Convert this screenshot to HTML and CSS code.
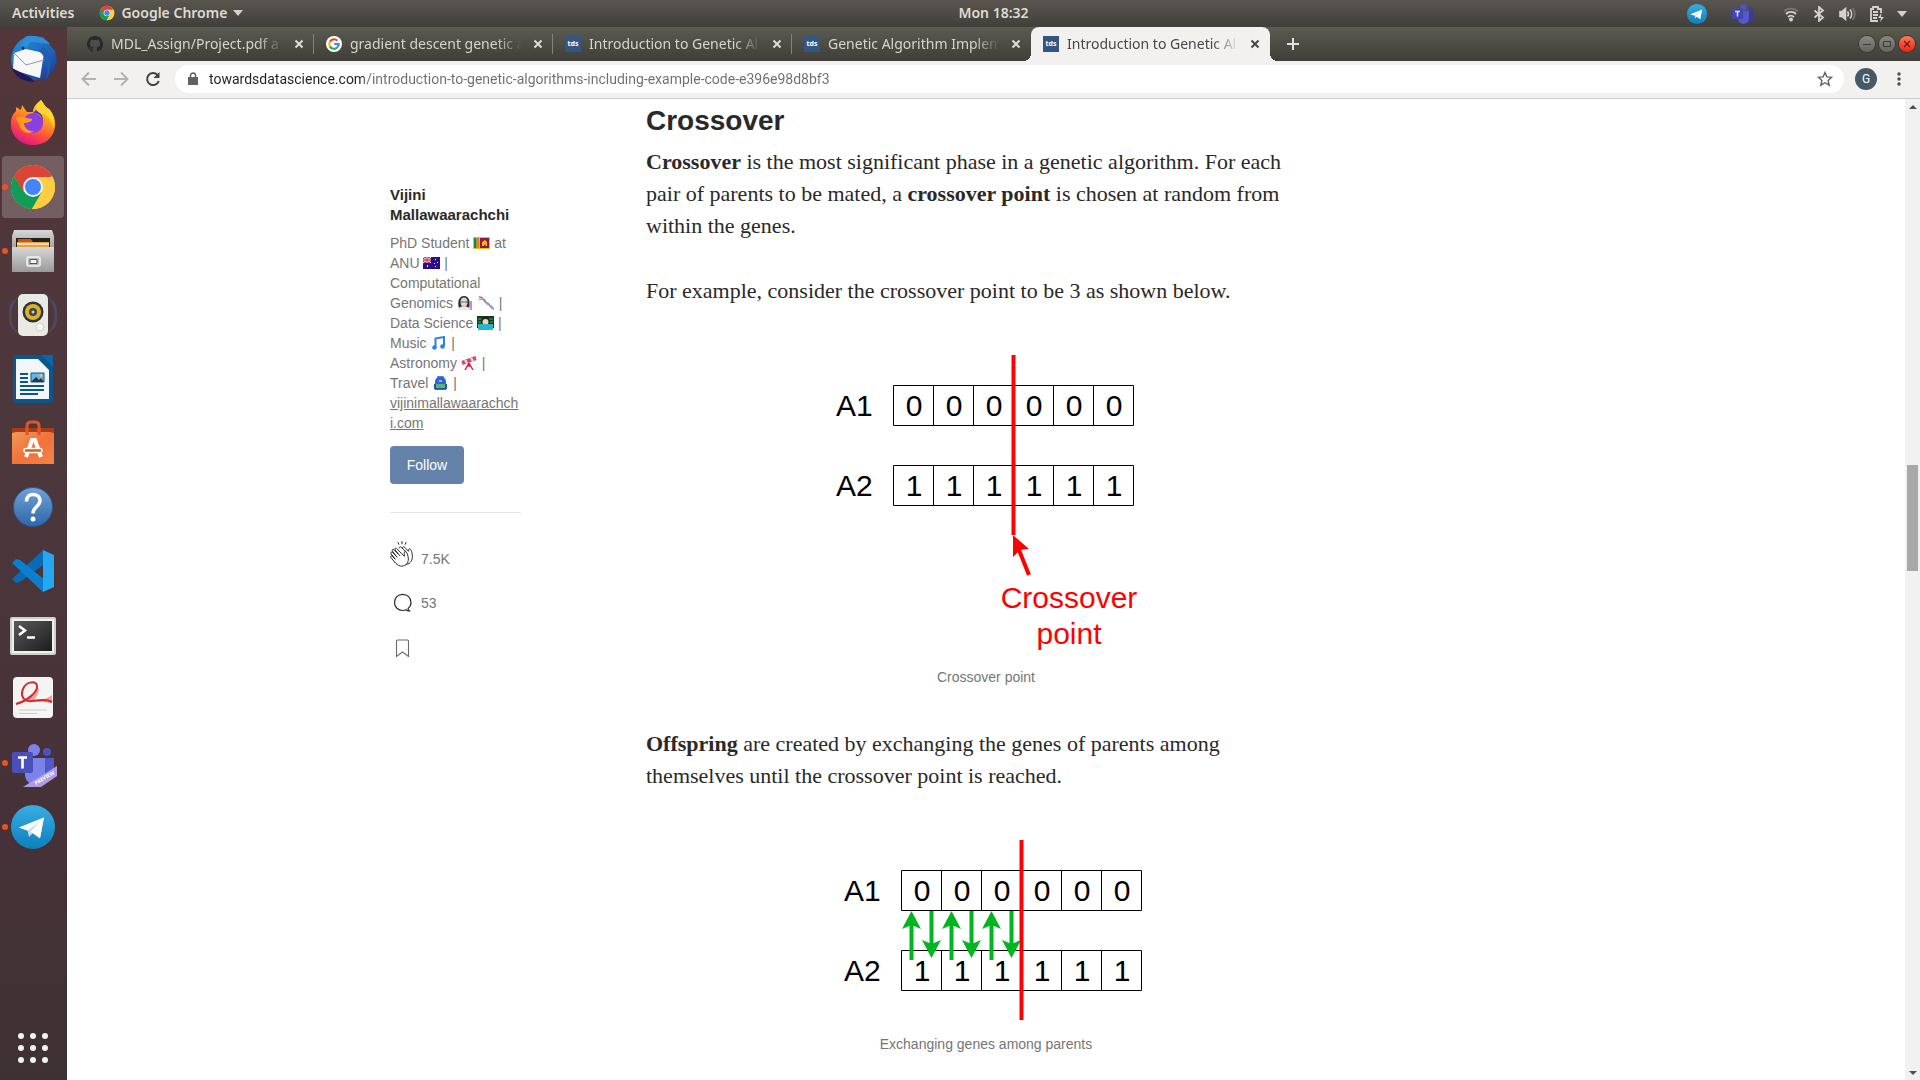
FILE: index.html
```html
<!DOCTYPE html>
<html lang="en">
<head>
<meta charset="utf-8">
<meta name="viewport" content="width=device-width, initial-scale=1">
<title>Introduction to Genetic Algorithms</title>
<link rel="stylesheet" href="styles.css">
</head>
<body>
<svg class="defs" width="0" height="0" aria-hidden="true">
  <defs>
    <linearGradient id="tg" x1="0" y1="0" x2="0" y2="1"><stop offset="0" stop-color="#37aee2"/><stop offset="1" stop-color="#0d7fbd"/></linearGradient>
    <linearGradient id="ffx" x1=".8" y1="0" x2=".3" y2="1"><stop offset="0" stop-color="#fff44f"/><stop offset=".35" stop-color="#ffa31a"/><stop offset=".7" stop-color="#ff4a3f"/><stop offset="1" stop-color="#e0128c"/></linearGradient>
    <linearGradient id="bird" x1="0" y1="0" x2="1" y2="1"><stop offset="0" stop-color="#2a8fe0"/><stop offset=".6" stop-color="#1c63b8"/><stop offset="1" stop-color="#1c2f8c"/></linearGradient>
    <linearGradient id="steel" x1="0" y1="0" x2="0" y2="1"><stop offset="0" stop-color="#d6d6d6"/><stop offset="1" stop-color="#9a9a9a"/></linearGradient>
    <linearGradient id="bag" x1="0" y1="0" x2="1" y2="1"><stop offset="0" stop-color="#f09a5a"/><stop offset=".5" stop-color="#f0733a"/><stop offset="1" stop-color="#f4824a"/></linearGradient>
    <linearGradient id="helpg" x1="0" y1="0" x2="0" y2="1"><stop offset="0" stop-color="#6fa3d8"/><stop offset="1" stop-color="#2f66a8"/></linearGradient>
    <linearGradient id="term" x1="0" y1="0" x2="1" y2="1"><stop offset="0" stop-color="#5a5a5a"/><stop offset="1" stop-color="#1c1c1c"/></linearGradient>
    <symbol id="chrome" viewBox="0 0 48 48">
      <circle cx="24" cy="24" r="22" fill="#ffcd40"/>
      <path d="M24 24 43 13A22 22 0 0 0 4.900 13L14 29z" fill="#db4437"/>
      <path d="M4.900 13A22 22 0 0 0 23 46L33 29 24 24 14.500 29z" fill="#0f9d58"/>
      <path d="M24 14H43.600A22 22 0 0 1 23 46L33 29z" fill="#ffcd40"/>
      <circle cx="24" cy="24" r="10" fill="#f1f1f1"/><circle cx="24" cy="24" r="8" fill="#4285f4"/>
    </symbol>
    <symbol id="telegram" viewBox="0 0 48 48">
      <circle cx="24" cy="24" r="22" fill="url(#tg)"/>
      <path d="M10 24.500 35 14.500 31 35 24 30 20 34 18.500 27.500z" fill="#c8daea"/>
      <path d="M10 24.500 35 14.500 31 35.500 21.500 28.500 31 18.500 18.500 27.500z" fill="#fff"/>
    </symbol>
    <symbol id="tds" viewBox="0 0 16 16"><path d="M0 0h16v16H0z" fill="#355680"/><text x="8" y="10" text-anchor="middle" font-family="Noto Sans, sans-serif" font-weight="700" font-size="7" fill="#fff">tds</text></symbol>
    <symbol id="cross" viewBox="0 0 16 16"><path d="M4.500 4.500l7 7M11.500 4.500l-7 7" stroke="currentColor" stroke-width="2" fill="none"/></symbol>
  </defs>
</svg>

<header class="topbar">
  <div class="top-left">
    <button class="top-btn">Activities</button>
    <button class="top-btn app-menu"><svg width="16" height="16"><use href="#chrome"/></svg>Google Chrome<span class="caret"></span></button>
  </div>
  <button class="top-btn clock">Mon 18:32</button>
  <div class="tray">
    <svg class="tray-app" width="22" height="22"><use href="#telegram"/></svg>
    <svg class="tray-teams" width="22" height="20" viewBox="0 0 22 20"><circle cx="18.500" cy="4.500" r="2.300" fill="#3a3f9f"/><path d="M15 7h7v6a4 4 0 0 1-7 3z" fill="#383d9c"/><circle cx="11.500" cy="3.300" r="3.200" fill="#4f54c0"/><path d="M6 7h11v7a5.500 5.500 0 0 1-11 1z" fill="#5458cc"/><path d="M0 4.500h11v10.500H0z" fill="#4146b4"/><path d="M3 7.500h5M5.500 7.500v5" stroke="#ddd" stroke-width="1.500"/></svg>
    <svg width="16" height="16" viewBox="0 0 16 16" fill="none" stroke-width="1.800"><path d="M1 5.500a10 10 0 0 1 14 0" stroke="#77756f"/><path d="M3 8a7 7 0 0 1 10 0M5 11a4.500 4.500 0 0 1 6 0" stroke="#d4d2cc"/><circle cx="8" cy="13.500" r="2" fill="#d4d2cc"/></svg>
    <svg width="16" height="16" viewBox="0 0 16 16" fill="none" stroke="#d4d2cc" stroke-width="1.800"><path d="M3.500 4.500l8.500 7-4 3.500V1l4 3.500-8.500 7"/></svg>
    <svg width="18" height="16" viewBox="0 0 18 16" fill="none" stroke="#d4d2cc" stroke-width="1.600"><path d="M1 5.500h2L6.500 2.500v11L3 10.500H1z" fill="#d4d2cc"/><path d="M8.500 5.500a4 4 0 0 1 0 5M11 3.500a7 7 0 0 1 0 9"/><path d="M13.500 2a9 9 0 0 1 0 12" stroke="#77756f"/></svg>
    <svg width="16" height="18" viewBox="0 0 16 18" fill="none" stroke="#d4d2cc" stroke-width="1.800"><path d="M9 16H2V4h2V2h5v2h3v4M4 7h5M4 10h5M4 13h4"/><path d="M12.500 8 9 13h3l-1 4 4-5h-3z" fill="#d4d2cc" stroke="none"/></svg>
    <span class="caret"></span>
  </div>
</header>

<div class="desktop">
  <nav class="launcher" aria-label="Launcher">
    <button class="dock" aria-label="Mail"><svg viewBox="0 0 48 48"><circle cx="25" cy="24" r="21" fill="url(#bird)"/><path d="M4 33C-1 22 4 8 18 1L34 2 46 16 48 27 43 37 35 47 38 36 33 21z" fill="url(#bird)"/><path d="M19 1c8-1 17 2 22 8l-19-2-4 5-7 5C12 9 14 4 19 1z" fill="#2c8fd8"/><path d="M5 18 17 14 35 18 31 43 4 35z" fill="#f7f7f7"/><path d="M5 18 17 30 35 25" fill="none" stroke="#999" stroke-width="1"/><path d="M3 33l18 9 5 5C15 47 6 42 3 33z" fill="#28165c"/><path d="M35 12c9 8 8 22 2 34 4-13 1-23-7-30z" fill="#1e5db0"/><circle cx="14" cy="13" r="1.500" fill="#3b2420"/></svg></button>
    <button class="dock" aria-label="Firefox"><svg viewBox="0 0 48 48"><path d="M32 1c3 4 4 7 8 9 5 5 8 14 5 22-3 9-11 14-21 14C11 46 1 36 2 24c0-6 2-9 5-12V8l5 3 1-5 5 7h6c0-5 4-9 8-12z" fill="url(#ffx)"/><circle cx="24" cy="24" r="10" fill="#8a3fe0"/><path d="M24 14c8 0 11 6 9 13 3-7 0-13-6-16z" fill="#5a2fc8"/><path d="M7 19c5-3 10 0 16 1 1 2-4 4-8 4 0 5 5 9 10 8-7 5-14 0-15-7z" fill="#ff9a1f"/><path d="M32 1c3 4 4 7 8 9 4 5 6 10 4 19-1-8-5-13-13-15-5-2-5-8 1-13z" fill="#ffd52e"/></svg></button>
    <button class="dock running current" aria-label="Google Chrome"><svg><use href="#chrome"/></svg></button>
    <button class="dock running" aria-label="Files"><svg viewBox="0 0 48 48"><path d="M5 3h38l2 6v15H3V9z" fill="url(#steel)"/><path d="M7 11h34v12H7z" fill="#25201c"/><path d="M9 12h13l2 3h15v9H9z" fill="#c4541a"/><path d="M8 15h32v8H8z" fill="#f39a3c"/><path d="M8 17h32" stroke="#fff3d8" stroke-width="1.500"/><path d="M3 20h42v25H3z" fill="url(#steel)"/><rect x="18" y="30" width="13" height="9" rx="2" fill="#bbb" stroke="#e6e6e6" stroke-width="2"/><path d="M21 32.500h7v4h-7z" fill="#f4f4f4" stroke="#555"/></svg></button>
    <button class="dock" aria-label="Rhythmbox"><svg viewBox="0 0 48 48"><path d="M8 7C-1 17 0 34 8 41M4 10c-5 8-5 20 0 28M40 7c9 10 8 27 0 34M44 10c5 8 5 20 0 28" stroke="#4b4a66" stroke-width="1.500" fill="none"/><rect x="9" y="3" width="30" height="42" rx="5" fill="#e9e9e6"/><circle cx="24" cy="21" r="10.500" fill="#333"/><circle cx="24" cy="21" r="8" fill="#d8b42a"/><circle cx="24" cy="21" r="4" fill="#444"/><circle cx="24" cy="21" r="1.500" fill="#ccc"/><circle cx="31" cy="36" r="4" fill="#f8f8f8" stroke="#ccc"/></svg></button>
    <button class="dock" aria-label="LibreOffice Writer"><svg viewBox="0 0 48 48"><path d="M6 0h27l11 11v34a3 3 0 0 1-3 3H7a3 3 0 0 1-3-3V2a2 2 0 0 1 2-2z" fill="#0b568c"/><path d="M32 0h12v12z" fill="#0a67a8"/><path d="M7 4h22l11 11v29H7z" fill="#f3f6f8"/><path d="M11 19h8M11 23h8M11 27h8M11 31h24M11 35h24M11 39h18" stroke="#0b568c" stroke-width="2"/><path d="M22 18h13v9H22z" fill="#62b7e8" stroke="#0b568c"/><path d="M22 27l5-5 3 3 2-2 3 4z" fill="#333"/><circle cx="32" cy="20.500" r="1.500" fill="#f6c544"/></svg></button>
    <button class="dock" aria-label="Ubuntu Software"><svg viewBox="0 0 48 48"><path d="M3 9h42v8H3z" fill="#a93b16"/><path d="M18 17V7q0-4 4-4h4q4 0 4 4v10" fill="none" stroke="#dd5426" stroke-width="3"/><path d="M3 14l4-1h34l4 1v31H3z" fill="url(#bag)"/><path d="M18 9v7M30 9v7" stroke="#dd5426" stroke-width="3"/><path d="M17 38 23 21h3l6 17" fill="none" stroke="#fff" stroke-width="4"/><rect x="15" y="29.500" width="18" height="4" rx="2" fill="#e9590c" stroke="#fff" stroke-width="1.500"/></svg></button>
    <button class="dock" aria-label="Help"><svg viewBox="0 0 48 48"><circle cx="24" cy="24" r="19.500" fill="url(#helpg)" stroke="#2c5a94"/><path d="M17.500 18.500c0-5 3-7 6.500-7 4 0 7 2 7 6 0 6-7 6-7 13" fill="none" stroke="#fff" stroke-width="3.500"/><circle cx="24" cy="36" r="2.500" fill="#fff"/></svg></button>
    <button class="dock" aria-label="Visual Studio Code"><svg viewBox="0 0 48 48"><path d="M34 3 3 32l4 4 4-1 27-20z" fill="#0a6ab6"/><path d="M3 16l4-4 4 1 25 20-2 12z" fill="#0a7fd0"/><path d="M34 3l11 5v32l-11 5z" fill="#27a7f2"/></svg></button>
    <button class="dock" aria-label="Terminal"><svg viewBox="0 0 48 48"><rect x="1" y="6" width="46" height="38" rx="2" fill="#cfcfcc"/><rect x="3" y="8" width="42" height="34" fill="#f0f0ee"/><path d="M5 10h38v30H5z" fill="url(#term)"/><path d="M10 15l6 4.500-6 4.500M18 26.500h8" fill="none" stroke="#fff" stroke-width="2.500"/></svg></button>
    <button class="dock" aria-label="Document Viewer"><svg viewBox="0 0 48 48"><rect x="4" y="2" width="40" height="41" rx="4" fill="#f4f4f4"/><path d="M7 29C18 26 29 17 28 11c4 4 0 10-3 14 7 1 13-1 18-5v8c-9-2-17 0-23-2z" fill="#f0a0a0"/><path d="M7 29C18 26 29 17 28 11 27 5 18 7 15 12 10 21 15 27 23 26s14-2 20 1" fill="none" stroke="#d42a2a" stroke-width="2"/><path d="M10 35h28M10 38.500h18" stroke="#ccc" stroke-width="1.200"/></svg></button>
    <button class="dock running" aria-label="Teams"><svg viewBox="0 0 48 48"><circle cx="38" cy="13" r="4" fill="#4c52bf"/><path d="M32 19h13v12a8 8 0 0 1-13 6z" fill="#5059c9"/><circle cx="25" cy="11" r="6" fill="#7b83eb"/><path d="M16 19h20v15a10 10 0 0 1-20 3z" fill="#7b83eb"/><rect x="3" y="13" width="21" height="21" rx="2" fill="#4a50ba"/><path d="M9 18.500h9M13.500 18.500v11" stroke="#fff" stroke-width="2.600"/><path d="M14 48 48 27v10L32 48z" fill="#b09ae0"/><text class="ribbon" x="27" y="46" transform="rotate(-31 27 46)">PREVIEW</text></svg></button>
    <button class="dock running" aria-label="Telegram"><svg><use href="#telegram"/></svg></button>
    <button class="dock apps" aria-label="Show applications"><svg viewBox="0 0 48 48" fill="#f2f2f0"><circle cx="12" cy="12" r="3"/><circle cx="24" cy="12" r="3"/><circle cx="36" cy="12" r="3"/><circle cx="12" cy="24" r="3"/><circle cx="24" cy="24" r="3"/><circle cx="36" cy="24" r="3"/><circle cx="12" cy="36" r="3"/><circle cx="24" cy="36" r="3"/><circle cx="36" cy="36" r="3"/></svg></button>
  </nav>

  <div class="browser">
    <div class="tabstrip">
      <div class="tab"><svg class="fav" viewBox="0 0 16 16"><path fill="#24292e" d="M8 0C3.580 0 0 3.580 0 8c0 3.540 2.290 6.530 5.470 7.590.400.070.550-.170.550-.380v-1.490c-2.010.370-2.530-.490-2.690-.940-.090-.230-.480-.940-.820-1.130-.280-.150-.680-.520-.010-.530.630-.010 1.080.580 1.230.820.720 1.210 1.870.870 2.330.660.070-.520.280-.870.510-1.070-1.780-.200-3.640-.890-3.640-3.950 0-.870.310-1.590.820-2.150-.080-.200-.360-1.020.080-2.120 0 0 .670-.210 2.200.820a7.600 7.600 0 0 1 4 0c1.530-1.040 2.200-.820 2.200-.820.440 1.100.160 1.920.080 2.120.510.560.820 1.270.820 2.150 0 3.070-1.870 3.750-3.650 3.950.290.250.540.730.540 1.480v2.200c0 .210.150.460.550.380A8 8 0 0 0 16 8c0-4.420-3.580-8-8-8z"/></svg><span class="tab-title">MDL_Assign/Project.pdf a</span><button class="close" aria-label="Close tab"><svg><use href="#cross"/></svg></button></div>
      <div class="tab"><svg class="fav" viewBox="0 0 16 16"><circle cx="8" cy="8" r="8" fill="#fff"/><g fill="none" stroke-width="2.200"><path d="M11.400 4.700A4.800 4.800 0 0 0 3.800 5.700" stroke="#ea4335"/><path d="M3.800 5.700a4.800 4.800 0 0 0 0 4.700" stroke="#fbbc05"/><path d="M3.800 10.400a4.800 4.800 0 0 0 7.400 1.100" stroke="#34a853"/><path d="M11.200 11.500c1.200-1.100 1.600-2.300 1.500-3.500H8.200" stroke="#4285f4"/></g></svg><span class="tab-title">gradient descent genetic a</span><button class="close" aria-label="Close tab"><svg><use href="#cross"/></svg></button></div>
      <div class="tab"><svg class="fav"><use href="#tds"/></svg><span class="tab-title">Introduction to Genetic Al</span><button class="close" aria-label="Close tab"><svg><use href="#cross"/></svg></button></div>
      <div class="tab last"><svg class="fav"><use href="#tds"/></svg><span class="tab-title">Genetic Algorithm Implem</span><button class="close" aria-label="Close tab"><svg><use href="#cross"/></svg></button></div>
      <div class="tab active"><svg class="fav"><use href="#tds"/></svg><span class="tab-title">Introduction to Genetic Al</span><button class="close" aria-label="Close tab"><svg><use href="#cross"/></svg></button></div>
      <button class="new-tab" aria-label="New tab"><svg width="14" height="14" viewBox="0 0 14 14"><path d="M7 1v12M1 7h12" stroke="#e3e2dc" stroke-width="2"/></svg></button>
      <div class="win-controls">
        <button class="win" aria-label="Minimize"><svg viewBox="0 0 16 16"><path d="M4 8.500h8" stroke="#3a3935"/></svg></button>
        <button class="win" aria-label="Maximize"><svg viewBox="0 0 16 16"><path d="M4.500 5.500h7v5h-7z" fill="none" stroke="#3a3935"/></svg></button>
        <button class="win shut" aria-label="Close"><svg viewBox="0 0 16 16"><path d="M5 5l6 6M11 5l-6 6" stroke="#6b1d10" stroke-width="1.300"/></svg></button>
      </div>
    </div>

    <div class="toolbar">
      <button class="nav" aria-label="Back"><svg viewBox="0 0 16 16" stroke="#b3b2b0"><path d="M15 8H2M8 1.500 1.500 8 8 14.500"/></svg></button>
      <button class="nav" aria-label="Forward"><svg viewBox="0 0 16 16" stroke="#b3b2b0"><path d="M1 8h13M8 1.500 14.500 8 8 14.500"/></svg></button>
      <button class="nav" aria-label="Reload"><svg viewBox="0 0 16 16" stroke="#3f4043"><path d="M13.800 10A6 6 0 1 1 12.500 4"/><path d="M14.500 1v6h-6z" fill="#3f4043" stroke="none"/></svg></button>
      <div class="omnibox">
        <svg width="10" height="14" viewBox="0 0 10 14"><path d="M0 5h10v8H0z" fill="#5f6368"/><path d="M2.500 6V3.500a2.500 2.500 0 0 1 5 0V6" fill="none" stroke="#5f6368" stroke-width="1.500"/></svg>
        <input class="url" type="text" aria-label="Address" value="towardsdatascience.com/introduction-to-genetic-algorithms-including-example-code-e396e98d8bf3">
        <button class="star" aria-label="Bookmark this tab"><svg width="16" height="16" viewBox="0 0 16 16"><path d="M8 1.500l1.900 4.400 4.800.400-3.600 3.200 1.100 4.700L8 11.700l-4.200 2.500 1.100-4.700L1.300 6.300l4.800-.4z" fill="none" stroke="#5f6368" stroke-width="1.400"/></svg></button>
      </div>
      <button class="avatar" aria-label="Profile">G</button>
      <button class="kebab" aria-label="Menu"><svg width="4" height="14" viewBox="0 0 4 14" fill="#4a4b4e"><circle cx="2" cy="2" r="1.700"/><circle cx="2" cy="7" r="1.700"/><circle cx="2" cy="12" r="1.700"/></svg></button>
    </div>

    <div class="viewport">
      <main class="page">
        <aside class="author">
          <h2 class="author-name">Vijini Mallawaarachchi</h2>
          <p class="bio">PhD Student
            <svg class="emoji" viewBox="0 0 17 14"><path d="M0 1h17v12H0z" fill="#f5b81c"/><path d="M1 2h2.500v10H1z" fill="#0a8a5a"/><path d="M3.500 2H6v10H3.500z" fill="#ee7a22"/><path d="M7 2h9v10H7z" fill="#8d1b3d"/><path d="M9 10V6l3-2 2 2v4h-1.500V8l-2 2z" fill="#f5b81c"/></svg>
            at<br>ANU
            <svg class="emoji" viewBox="0 0 17 14"><path d="M0 1h17v12H0z" fill="#2a0f86"/><path d="M0 4h8M4 1v6" stroke="#fff" stroke-width="2.500"/><path d="M0 1l8 6M8 1 0 7" stroke="#fff"/><path d="M0 4h8M4 1v6" stroke="#e0314a" stroke-width="1.300"/><path d="M4 9h1v2H4zM12 3h1v1h-1zM14 6h1v1h-1zM11 7h1v1h-1zM12 10h1v1h-1z" fill="#fff"/></svg>
            |<br>Computational<br>Genomics
            <svg class="emoji" viewBox="0 0 17 14"><path d="M2 12C0 6 2 0 7 0s7 6 5 12z" fill="#2b2b2b"/><ellipse cx="7" cy="6" rx="3.500" ry="4.500" fill="#f3d3b8"/><path d="M1 14c0-5 12-5 12 0z" fill="#e2eaf0"/><path d="M4 5h2.500v2H4zM7.500 5H10v2H7.500z" fill="#5aa3b8" /><path d="M12 5h3v9h-2z" fill="#c58be0"/></svg>
            <svg class="emoji" viewBox="0 0 17 14"><path d="M1 1c5-1 4 5 8 6s3 6 7 6" fill="none" stroke="#e0506c" stroke-width="1.500"/><path d="M1 3c3 2 5-3 7 3s5 0 7 7" fill="none" stroke="#7fa6ea" stroke-width="1.300"/></svg>
            |<br>Data Science
            <svg class="emoji" viewBox="0 0 17 14"><path d="M0 0h17v12H0z" fill="#17361f"/><path d="M1 3h4M1 6h3M12 3h4M13 6h3" stroke="#37c04c"/><circle cx="8.500" cy="5" r="4.500" fill="#222"/><circle cx="8.500" cy="6" r="3" fill="#f3d3b8"/><path d="M1 8h15v6H1z" fill="#25b7cc"/></svg>
            |<br>Music
            <svg class="emoji" viewBox="0 0 17 14"><path d="M5.500 11V2.500L14 1v9" fill="none" stroke="#2f7fe6" stroke-width="2"/><circle cx="4.500" cy="11.500" r="2.300" fill="#2f7fe6"/><circle cx="12.500" cy="10.500" r="2.300" fill="#2f7fe6"/></svg>
            |<br>Astronomy
            <svg class="emoji" viewBox="0 0 17 14"><path d="M1 7 15 2" stroke="#d9486a" stroke-width="4"/><path d="M4 6l2-1M10 4l2-1" stroke="#dfe3ea" stroke-width="4"/><path d="M8 7 4 14M8 7l4 7M8 7v4" stroke="#d5233f" stroke-width="1.500"/></svg>
            |<br>Travel
            <svg class="emoji" viewBox="0 0 17 14"><path d="M6 3V1h5v2" fill="none" stroke="#2c55c0" stroke-width="1.500"/><path d="M3 14V6q0-5 5.500-5T14 6v8z" fill="#2f63d8"/><path d="M2 8h13v5H2z" fill="#2650b4"/><path d="M4 8h9v4H4z" fill="#5bb56a"/><path d="M7 5h3" stroke="#f3c940" stroke-width="1.500"/></svg>
            |<br><a class="site" href="#">vijinimallawaarachchi.com</a></p>
          <button class="follow">Follow</button>
          <div class="stats">
            <button class="stat"><svg width="24" height="28" viewBox="0 0 24 28" fill="none" stroke="#292929" stroke-linecap="round" stroke-linejoin="round"><path d="M8 1.500l.8 1.800M12 .6v2.200M16 1.500l-.8 1.800"/><path d="M5 21.500.8 16.300c-.7-1 .6-2 1.400-1.200l3 3M4.800 17.500 1 12.800c-.8-1.200.7-2.300 1.600-1.300l4.600 4.700M6 15 2.300 10c-.7-1.200.8-2.200 1.700-1.200l6 6M8 12.500 5 8.800c-.7-1.200.8-2.200 1.700-1.200l7.600 7.700c.6-2-.8-4.300.5-4.800 1.500-.4 2.200 1.500 2.800 3.300 1.300 4 1 7.500-1.600 9.800-3.600 3-8 1.400-11-2.100"/><path d="M9 7c.2-1.400 1.600-1.500 2.400-.6l5 4.800M12.500 6.500c.5-1.100 1.600-.9 2.200-.2l3.800 4c-.2-1.500.2-2.500 1.200-2.400 1.300.4 1.700 2 2.200 3.700 1 4.500.5 8.500-2.900 10.900-.8.600-1.700.8-2.500.8"/></svg>7.5K</button>
            <button class="stat"><svg width="24" height="20" viewBox="0 0 24 20" fill="none" stroke="#292929" stroke-width="1.200"><path d="M18 15.500c1.900-1.500 3-3.800 3-6C21 4.800 17.400 1.300 12.600 1.300S4.500 4.800 4.500 9.500s3.600 8 8.100 8c1.300 0 2.300-.2 3.300-.7 1 .8 2.300 1.200 3.600 1.200-.8-.6-1.300-1.300-1.500-2.500z"/></svg>53</button>
            <button class="stat" aria-label="Save"><svg width="24" height="20" viewBox="0 0 24 20" fill="none" stroke="#6b6b6b" stroke-width="1.100"><path d="M6.500 19.500V4q0-1 1-1h10q1 0 1 1v15.500l-6-4.500z"/></svg></button>
          </div>
        </aside>

        <article class="story">
          <h1 class="heading">Crossover</h1>
          <p class="para"><strong>Crossover</strong> is the most significant phase in a genetic algorithm. For each<br>pair of parents to be mated, a <strong>crossover point</strong> is chosen at random from<br>within the genes.</p>
          <p class="para">For example, consider the crossover point to be 3 as shown below.</p>
          <figure class="figure">
            <svg class="diagram" width="320" height="300" viewBox="0 0 320 300">
              <g class="cells"><path d="M67.500 30.500h240v40h-240zM107.500 30.500v40M147.500 30.500v40M187.500 30.500v40M227.500 30.500v40M267.500 30.500v40"/><path d="M67.500 110.500h240v40h-240zM107.500 110.500v40M147.500 110.500v40M187.500 110.500v40M227.500 110.500v40M267.500 110.500v40"/></g>
              <text x="10" y="61">A1</text><text x="10" y="141">A2</text>
              <g class="mid"><text x="88" y="61">0</text><text x="128" y="61">0</text><text x="168" y="61">0</text><text x="208" y="61">0</text><text x="248" y="61">0</text><text x="288" y="61">0</text>
              <text x="88" y="141">1</text><text x="128" y="141">1</text><text x="168" y="141">1</text><text x="208" y="141">1</text><text x="248" y="141">1</text><text x="288" y="141">1</text></g>
              <path d="M187.500 0v180" stroke="#f00" stroke-width="4"/>
              <path d="M203 220l-10-25" stroke="#f00" stroke-width="4"/><path d="M187 180l16 14-9 1-7 7z" fill="#f00"/>
              <g class="mid red"><text x="243" y="253">Crossover</text><text x="243" y="289">point</text></g>
            </svg>
            <figcaption class="caption">Crossover point</figcaption>
          </figure>
          <p class="para"><strong>Offspring</strong> are created by exchanging the genes of parents among<br>themselves until the crossover point is reached.</p>
          <figure class="figure">
            <svg class="diagram" width="304" height="182" viewBox="0 0 304 182">
              <g class="cells"><path d="M67.500 30.500h240v40h-240zM107.500 30.500v40M147.500 30.500v40M187.500 30.500v40M227.500 30.500v40M267.500 30.500v40"/><path d="M67.500 110.500h240v40h-240zM107.500 110.500v40M147.500 110.500v40M187.500 110.500v40M227.500 110.500v40M267.500 110.500v40"/></g>
              <text x="10" y="61">A1</text><text x="10" y="141">A2</text>
              <g class="mid"><text x="88" y="61">0</text><text x="128" y="61">0</text><text x="168" y="61">0</text><text x="208" y="61">0</text><text x="248" y="61">0</text><text x="288" y="61">0</text>
              <text x="88" y="141">1</text><text x="128" y="141">1</text><text x="168" y="141">1</text><text x="208" y="141">1</text><text x="248" y="141">1</text><text x="288" y="141">1</text></g>
              <path d="M77.500 120V84M97.500 71v34M117.500 120V84M137.500 71v34M157.500 120V84M177.500 71v34" stroke="#00b520" stroke-width="4"/>
              <path d="M77.500 71l9.500 18-9.500-4-9.500 4zM117.500 71l9.500 18-9.500-4-9.500 4zM157.500 71l9.500 18-9.500-4-9.500 4zM97.500 118l-9.500-18 9.500 4 9.500-4zM137.500 118l-9.500-18 9.500 4 9.500-4zM177.500 118l-9.500-18 9.500 4 9.500-4z" fill="#00b520"/>
              <path d="M187.500 0v180" stroke="#f00" stroke-width="4"/>
            </svg>
            <figcaption class="caption">Exchanging genes among parents</figcaption>
          </figure>
        </article>
      </main>
      <div class="scrollbar" aria-hidden="true">
        <span class="arrow up"></span>
        <span class="track"><span class="thumb"></span></span>
        <span class="arrow down"></span>
      </div>
    </div>
  </div>
</div>
</body>
</html>
```
FILE: styles.css
```css
* { box-sizing: border-box; }

html, body { height: 100%; }

body {
  margin: 0;
  display: flex;
  flex-direction: column;
  overflow: hidden;
  background: #fff;
  font-family: "Noto Sans", sans-serif;
  font-size: 14px;
}

button {
  margin: 0;
  padding: 0;
  border: 0;
  background: none;
  color: inherit;
  font: inherit;
}

.defs { position: absolute; }

/* Desktop top bar: the clock is centred beside the launcher's column */
.topbar {
  display: grid;
  grid-template-columns: 67px 1fr auto 1fr;
  align-items: center;
  height: 27px;
  flex: none;
  background: linear-gradient(#59564f, #403f3a);
  color: #dfdbd2;
}

.top-left {
  grid-column: 1 / 3;
  display: flex;
  align-items: center;
  gap: 25px;
  padding-left: 12px;
}

.top-btn { padding-bottom: 2px; font-weight: 600; font-size: 14px; line-height: 20px; }

.app-menu { display: flex; align-items: center; gap: 6px; }

.caret {
  border: 5px solid transparent;
  border-top: 6px solid #d4d2cc;
  border-bottom: 0;
}

.tray { display: flex; align-items: center; justify-content: flex-end; gap: 12px; padding-right: 13px; }
.tray-app { margin-right: 12px; }
.tray-teams { margin-right: 17px; }

.desktop { flex: 1; display: flex; min-height: 0; }

/* Launcher */
.launcher {
  width: 67px;
  flex: none;
  display: flex;
  flex-direction: column;
  padding-right: 1px;
  background: linear-gradient(#533639, #4c373c 40%, #463138 75%, #3e3133);
}

.dock {
  position: relative;
  height: 64px;
  display: grid;
  place-items: center;
}

.dock svg { width: 48px; height: 48px; }

.current::before {
  content: "";
  position: absolute;
  inset: 1px 2px;
  border-radius: 4px;
  background: rgba(255, 255, 255, .2);
}

.current svg { position: relative; }

.running::after {
  content: "";
  position: absolute;
  left: 2px;
  top: 29px;
  width: 6px;
  height: 6px;
  border-radius: 50%;
  background: #e95420;
}

.apps { margin-top: auto; }

.ribbon { font: 700 5px "Noto Sans", sans-serif; fill: #fff; }

/* Browser frame */
.browser { flex: 1; min-width: 0; display: flex; flex-direction: column; }

.tabstrip {
  display: flex;
  align-items: stretch;
  height: 34px;
  flex: none;
  padding: 0 5px 0 8px;
  background: linear-gradient(#5a5b50, #3f3e39);
  color: #d6d5cb;
}

.tab {
  position: relative;
  flex: 0 1 239px;
  min-width: 0;
  display: flex;
  align-items: center;
  gap: 8px;
  padding: 0 7px 0 12px;
}

.tab::after {
  content: "";
  position: absolute;
  right: 0;
  top: 7px;
  width: 1px;
  height: 20px;
  background: #85847c;
}

.tab.last::after { display: none; }

.tab.active {
  background: #f2f1f0;
  color: #45474a;
  border-radius: 8px 8px 0 0;
}

.tab.active::before, .tab.active::after {
  content: "";
  position: absolute;
  top: auto;
  bottom: 0;
  width: 8px;
  height: 8px;
}

.tab.active::before { left: -8px; background: radial-gradient(circle at 0 0, transparent 8px, #f2f1f0 8px); }
.tab.active::after { right: -8px; background: radial-gradient(circle at 100% 0, transparent 8px, #f2f1f0 8px); }

.fav { width: 16px; height: 16px; flex: none; }

.tab-title {
  flex: 1;
  overflow: hidden;
  white-space: nowrap;
  line-height: 20px;
  mask-image: linear-gradient(90deg, #000 calc(100% - 26px), transparent);
}

.close { width: 16px; height: 16px; color: #dddcd4; }
.tab.active .close { color: #45474a; }
.close svg { display: block; width: 16px; height: 16px; }

.new-tab { width: 46px; display: grid; place-items: center; }

.win-controls { margin-left: auto; display: flex; align-items: center; gap: 4px; }

.win {
  width: 16px;
  height: 16px;
  border-radius: 50%;
  background: linear-gradient(#8a8981, #65645d);
  box-shadow: 0 0 0 1px #3a3934;
}

.win.shut { background: linear-gradient(#ff7a5c, #ee2211); }
.win svg { display: block; }

.toolbar {
  display: flex;
  align-items: center;
  height: 38px;
  flex: none;
  padding: 0 19px 2px 6px;
  background: #f2f1f0;
  border-bottom: 1px solid #ccc;
}

.nav { width: 32px; height: 28px; display: grid; place-items: center; }
.nav svg { width: 16px; height: 16px; fill: none; stroke-width: 2; }

.omnibox {
  flex: 1;
  display: flex;
  align-items: center;
  height: 28px;
  margin-left: 6px;
  padding: 0 11px 0 13px;
  border-radius: 14px;
  background: #fff;
}

.url {
  flex: 1;
  min-width: 0;
  margin-left: 11px;
  padding: 0;
  border: 0;
  outline: 0;
  font: 14px/20px Roboto, sans-serif;
  color: #6b6d70;
  background: linear-gradient(90deg, #202124 155px, #6b6d70 155px);
  background-clip: text;
  -webkit-background-clip: text;
  -webkit-text-fill-color: transparent;
}

.star { width: 16px; height: 16px; }
.star svg { display: block; }

.avatar {
  width: 22px;
  height: 22px;
  margin-left: 11px;
  border-radius: 50%;
  background: #455a64;
  color: #fff;
  font: 12px/22px Roboto, sans-serif;
}

.kebab { width: 4px; margin-left: 20px; }
.kebab svg { display: block; }

/* Page */
.viewport { flex: 1; min-height: 0; display: flex; }

.page {
  flex: 1;
  min-width: 0;
  overflow: hidden;
  display: grid;
  grid-template-columns: 131px minmax(0, 680px) 131px;
  grid-template-rows: max-content;
  column-gap: 125px;
  justify-content: center;
  font-family: "Liberation Sans", Arial, sans-serif;
}

.author { padding-top: 86px; color: #757575; line-height: 20px; }

.author-name { margin: 0; font-size: 15px; line-height: 20px; color: #292929; }

.bio { margin: 8px 0 13px; overflow-wrap: anywhere; }

.emoji { width: 17px; height: 14px; vertical-align: -2px; }

.site { color: inherit; word-break: break-all; }

.follow {
  width: 74px;
  height: 38px;
  border-radius: 4px;
  background: #6582ab;
  color: #fff;
}

.stats {
  display: flex;
  flex-direction: column;
  align-items: flex-start;
  margin-top: 28px;
  padding-top: 28px;
  border-top: 1px solid #e6e6e6;
}

.stat { display: flex; align-items: flex-end; gap: 7px; height: 28px; margin-bottom: 16px; line-height: 20px; }

.story { padding-top: 4px; color: #292929; }

.heading { margin: 0 0 7px; font-size: 28px; line-height: 36px; }

.para {
  margin: 0 0 33px;
  font-family: "Liberation Serif", "Times New Roman", serif;
  font-size: 22px;
  line-height: 32px;
}

.figure { margin: 48px 0 41px; text-align: center; }

.diagram {
  display: block;
  margin: 0 auto;
  overflow: visible;
  font: 30px "Liberation Sans", Arial, sans-serif;
  fill: #000;
}

.cells { fill: #fff; stroke: #000; }
.mid { text-anchor: middle; }
.red { fill: #f00; }

.caption { margin-top: 12px; font-size: 14px; line-height: 20px; color: #757575; }

/* Scrollbar */
.scrollbar {
  width: 15px;
  flex: none;
  display: flex;
  flex-direction: column;
  align-items: center;
  background: #f1f1f1;
}

.track { flex: 1; width: 11px; display: flex; flex-direction: column; }
.track::before { content: ""; flex: 350; }
.track::after { content: ""; flex: 494; }
.thumb { flex: 106; background: #a8a8a8; }

.arrow { margin: 5px 0; border: 4px solid transparent; }
.up { border-top: 0; border-bottom-color: #505050; margin: 6px 0 5px; }
.down { border-bottom: 0; border-top-color: #505050; }
```
